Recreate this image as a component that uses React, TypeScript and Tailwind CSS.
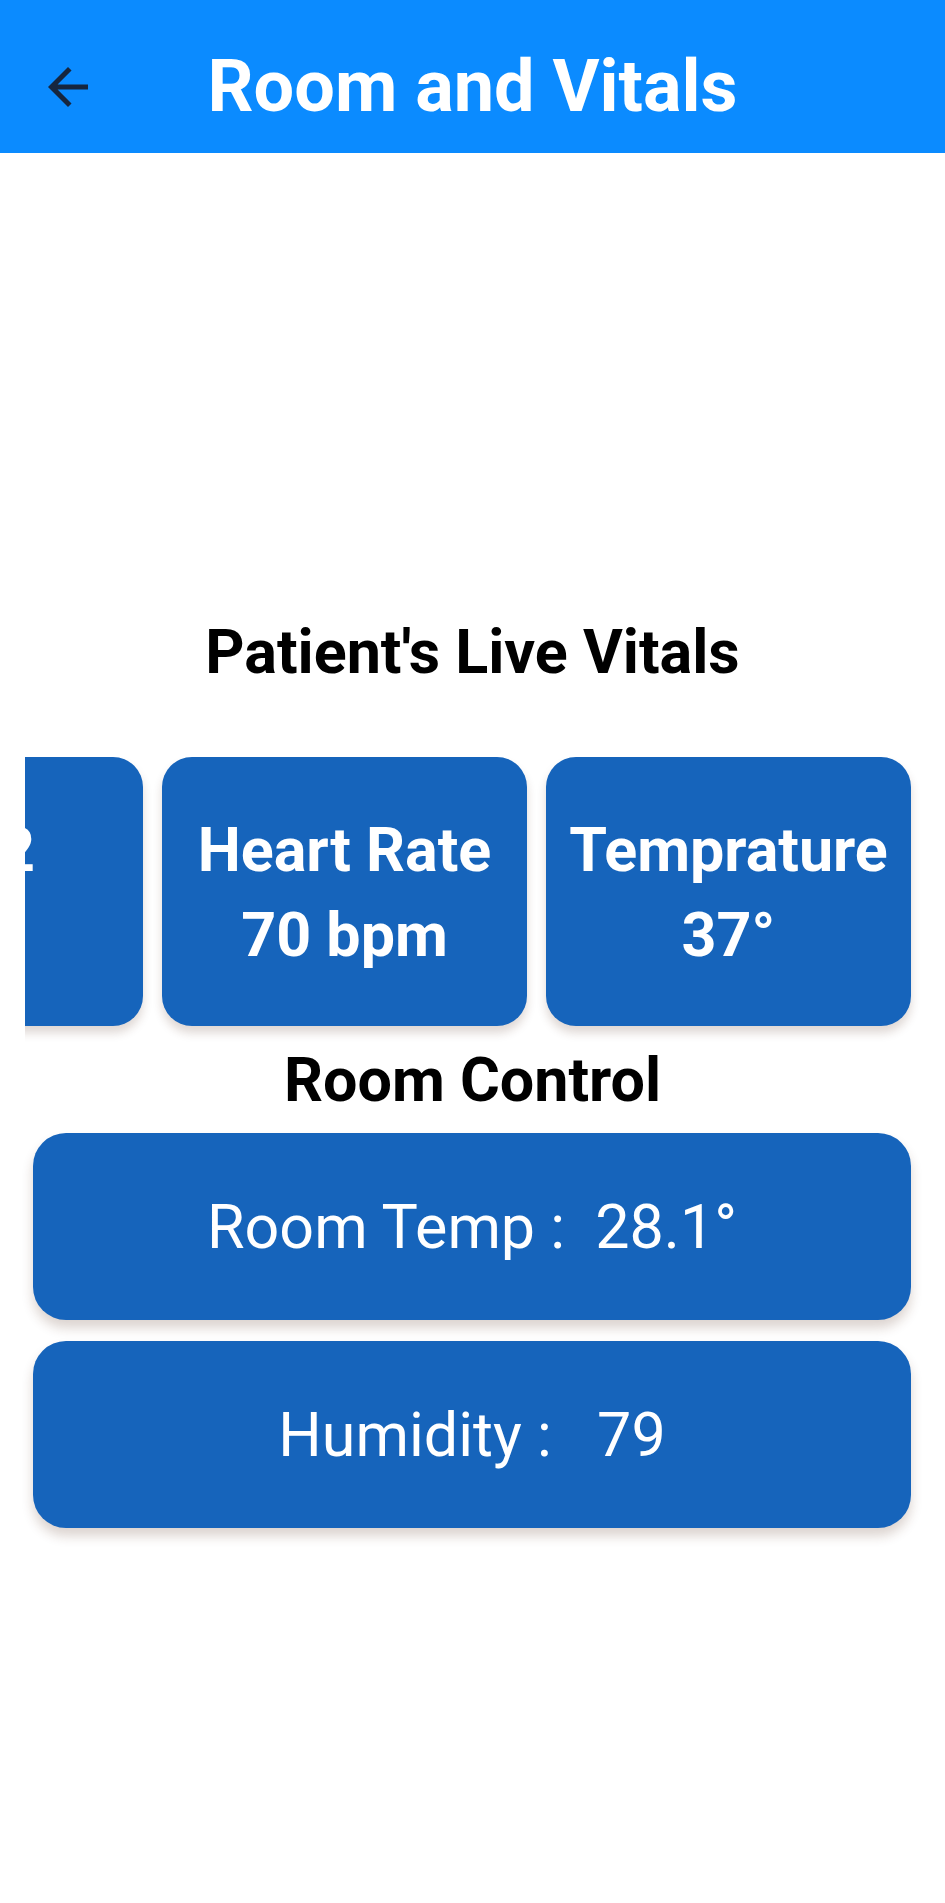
import React from "react";

const vitals = [
  { label: "SpO2", value: "98%" },
  { label: "Heart Rate", value: "70 bpm" },
  { label: "Temprature", value: "37°" },
];

function VitalCard({ label, value }: { label: string; value: string }) {
  return (
    <div className="w-[365px] h-[269px] shrink-0 rounded-[30px] bg-[#1664bb] shadow-[0_7px_10px_rgba(80,40,20,0.18)] flex flex-col items-center justify-center text-white font-bold text-[61px] leading-[85px] whitespace-nowrap pt-[2px]">
      <div>{label}</div>
      <div>{value}</div>
    </div>
  );
}

function RoomCard({ text }: { text: string }) {
  return (
    <div className="h-[187px] rounded-[33px] bg-[#1664bb] shadow-[0_8px_12px_rgba(80,40,20,0.2)] flex items-center justify-center text-white text-[61px] leading-[70px] whitespace-pre">
      {text}
    </div>
  );
}

export default function App() {
  return (
    <div className="min-h-[1903px] bg-white font-['Roboto',sans-serif]">
      <header className="h-[153px] bg-[#0b8bff] grid grid-cols-[1fr_auto_1fr] items-center pt-[21px]">
        <div className="pl-[38px] flex items-center">
          <svg width="60" height="60" viewBox="0 0 24 24" fill="#16263f">
            <path d="M20 11H7.83l5.59-5.59L12 4l-8 8 8 8 1.41-1.41L7.83 13H20v-2z" />
          </svg>
        </div>
        <h1 className="text-white font-bold text-[72px] leading-[72px] whitespace-nowrap">
          Room and Vitals
        </h1>
        <div />
      </header>

      <h2 className="mt-[464px] text-center text-black font-bold text-[61px] leading-[70px]">
        Patient's Live Vitals
      </h2>

      <div className="mt-[70px] mx-[25px] overflow-hidden pb-[19px]">
        <div className="flex gap-[19px] ml-[-247px]">
          {vitals.map((v) => (
            <VitalCard key={v.label} label={v.label} value={v.value} />
          ))}
        </div>
      </div>

      <h2 className="text-center text-black font-bold text-[61px] leading-[70px]">
        Room Control
      </h2>

      <div className="mt-[18px] ml-[33px] mr-[34px] flex flex-col gap-[21px]">
        <RoomCard text="Room Temp :  28.1°" />
        <RoomCard text="Humidity :   79" />
      </div>
    </div>
  );
}
